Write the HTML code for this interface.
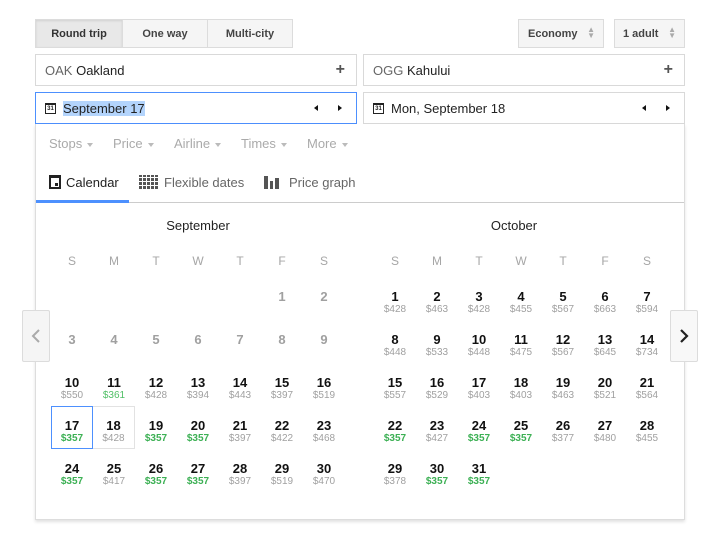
<!DOCTYPE html>
<html><head><meta charset="utf-8"><style>
*{box-sizing:border-box;margin:0;padding:0}
body{width:709px;height:542px;background:#fff;font-family:"Liberation Sans",Arial,sans-serif;position:relative;overflow:hidden;color:#222}
.a{position:absolute}
.btn{position:absolute;top:19px;height:29px;border:1px solid #dcdcdc;background:#f5f5f5;font-size:11px;font-weight:bold;color:#444;display:flex;align-items:center;justify-content:center}
.inp{position:absolute;height:32px;border:1px solid #d9d9d9;background:#fff;font-size:13px;display:flex;align-items:center;padding-left:9px}
.cal{display:inline-block;width:11px;height:11px;border:1px solid #222;font-size:6px;line-height:8px;text-align:center;margin-right:7px;font-weight:bold;border-top-width:2px}
.tri{position:absolute;top:12px;width:0;height:0;border-top:3.5px solid transparent;border-bottom:3.5px solid transparent}
.filt{position:absolute;top:136px;font-size:13px;color:#aaa}
.filt:after{content:"";display:inline-block;margin-left:5px;vertical-align:middle;border-left:3px solid transparent;border-right:3px solid transparent;border-top:4px solid #bbb}
.grid{position:absolute;top:277px;width:294px}
.c{position:absolute;width:42px;height:43px;text-align:center}
.c b{display:block;font-size:13px;line-height:14px;margin-top:13px;color:#111}
.c i{display:block;font-style:normal;font-size:10px;line-height:11px;color:#a0a0a0}
.c i.g{color:#3cb054;font-weight:bold}
.c.gr b{color:#a0a0a0}
.dh{position:absolute;top:254px;width:42px;text-align:center;font-size:12px;color:#a6a6a6}
.mt{position:absolute;top:218px;font-size:13px;color:#222;width:294px;text-align:center}
.ud{position:absolute;right:8px;top:7px;font-size:8px;line-height:6px;color:#aaa}
</style></head><body>
<div class="btn" style="left:35px;width:88px;background:#e8e8e8;box-shadow:inset 0 1px 2px rgba(0,0,0,.1);color:#333">Round trip</div>
<div class="btn" style="left:122px;width:86px">One way</div>
<div class="btn" style="left:207px;width:86px">Multi-city</div>
<div class="btn" style="left:518px;width:86px;justify-content:flex-start;padding-left:9px">Economy<span class="ud">▲<br>▼</span></div>
<div class="btn" style="left:614px;width:71px;justify-content:flex-start;padding-left:8px">1 adult<span class="ud">▲<br>▼</span></div>

<div class="inp" style="left:35px;top:54px;width:322px"><span style="color:#666">OAK&nbsp;</span>Oakland<span class="a" style="right:11px;top:6px;font-size:16px;color:#555;font-weight:bold">+</span></div>
<div class="inp" style="left:363px;top:54px;width:322px"><span style="color:#666">OGG&nbsp;</span>Kahului<span class="a" style="right:11px;top:6px;font-size:16px;color:#555;font-weight:bold">+</span></div>
<div class="inp" style="left:35px;top:92px;width:322px;border-color:#4d90fe"><span class="cal">31</span><span style="background:#b3d4fc;color:#222">September 17</span><span class="tri" style="right:38px;border-right:4px solid #111"></span><span class="tri" style="right:14px;border-left:4px solid #111"></span></div>
<div class="inp" style="left:363px;top:92px;width:322px"><span class="cal">31</span>Mon, September 18<span class="tri" style="right:38px;border-right:4px solid #111"></span><span class="tri" style="right:14px;border-left:4px solid #111"></span></div>

<div class="a" style="left:35px;top:124px;width:650px;height:396px;border:1px solid #ddd;border-top:none;box-shadow:0 2px 3px rgba(0,0,0,.12)"></div>
<div class="filt" style="left:49px">Stops</div>
<div class="filt" style="left:113px">Price</div>
<div class="filt" style="left:174px">Airline</div>
<div class="filt" style="left:241px">Times</div>
<div class="filt" style="left:307px">More</div>

<div class="a" style="left:49px;top:175px;width:12px;height:14px;border:2px solid #222;border-top-width:3px;background:#fff"><div class="a" style="left:4px;top:5px;width:3px;height:3px;background:#222"></div></div>
<div class="a" style="left:66px;top:175px;font-size:13px;color:#222">Calendar</div>
<div class="a" style="left:139px;top:175px;width:19px;height:14px;background:
repeating-linear-gradient(90deg,#555 0 3px,transparent 3px 4px),#fff;-webkit-mask:repeating-linear-gradient(0deg,#000 0 3px,transparent 3px 4px);"></div>
<div class="a" style="left:164px;top:175px;font-size:13px;color:#666">Flexible dates</div>
<div class="a" style="left:264px;top:176px;width:4px;height:13px;background:#555"></div>
<div class="a" style="left:270px;top:181px;width:3px;height:8px;background:#555"></div>
<div class="a" style="left:275px;top:178px;width:4px;height:11px;background:#555"></div>
<div class="a" style="left:289px;top:175px;font-size:13px;color:#666">Price graph</div>
<div class="a" style="left:36px;top:202px;width:648px;height:1px;background:#ccc"></div>
<div class="a" style="left:36px;top:200px;width:93px;height:3px;background:#4d90fe"></div>

<div class="mt" style="left:51px">September</div>
<div class="mt" style="left:367px">October</div>

<div class="dh" style="left:51px">S</div><div class="dh" style="left:93px">M</div><div class="dh" style="left:135px">T</div><div class="dh" style="left:177px">W</div><div class="dh" style="left:219px">T</div><div class="dh" style="left:261px">F</div><div class="dh" style="left:303px">S</div>
<div class="dh" style="left:374px">S</div><div class="dh" style="left:416px">M</div><div class="dh" style="left:458px">T</div><div class="dh" style="left:500px">W</div><div class="dh" style="left:542px">T</div><div class="dh" style="left:584px">F</div><div class="dh" style="left:626px">S</div>

<div class="grid" style="left:51px">
<div class="c gr" style="left:210px;top:0"><b>1</b></div>
<div class="c gr" style="left:252px;top:0"><b>2</b></div>
<div class="c gr" style="left:0;top:43px"><b>3</b></div>
<div class="c gr" style="left:42px;top:43px"><b>4</b></div>
<div class="c gr" style="left:84px;top:43px"><b>5</b></div>
<div class="c gr" style="left:126px;top:43px"><b>6</b></div>
<div class="c gr" style="left:168px;top:43px"><b>7</b></div>
<div class="c gr" style="left:210px;top:43px"><b>8</b></div>
<div class="c gr" style="left:252px;top:43px"><b>9</b></div>
<div class="c" style="left:0;top:86px"><b>10</b><i>$550</i></div>
<div class="c" style="left:42px;top:86px"><b>11</b><i style="color:#4fbf65">$361</i></div>
<div class="c" style="left:84px;top:86px"><b>12</b><i>$428</i></div>
<div class="c" style="left:126px;top:86px"><b>13</b><i>$394</i></div>
<div class="c" style="left:168px;top:86px"><b>14</b><i>$443</i></div>
<div class="c" style="left:210px;top:86px"><b>15</b><i>$397</i></div>
<div class="c" style="left:252px;top:86px"><b>16</b><i>$519</i></div>
<div class="c" style="left:0;top:129px;border:1px solid #4d90fe"><b style="margin-top:12px">17</b><i class="g">$357</i></div>
<div class="c" style="left:42px;top:129px;border:1px solid #e2e2e2;border-left:none"><b style="margin-top:12px">18</b><i>$428</i></div>
<div class="c" style="left:84px;top:129px"><b>19</b><i class="g">$357</i></div>
<div class="c" style="left:126px;top:129px"><b>20</b><i class="g">$357</i></div>
<div class="c" style="left:168px;top:129px"><b>21</b><i>$397</i></div>
<div class="c" style="left:210px;top:129px"><b>22</b><i>$422</i></div>
<div class="c" style="left:252px;top:129px"><b>23</b><i>$468</i></div>
<div class="c" style="left:0;top:172px"><b>24</b><i class="g">$357</i></div>
<div class="c" style="left:42px;top:172px"><b>25</b><i>$417</i></div>
<div class="c" style="left:84px;top:172px"><b>26</b><i class="g">$357</i></div>
<div class="c" style="left:126px;top:172px"><b>27</b><i class="g">$357</i></div>
<div class="c" style="left:168px;top:172px"><b>28</b><i>$397</i></div>
<div class="c" style="left:210px;top:172px"><b>29</b><i>$519</i></div>
<div class="c" style="left:252px;top:172px"><b>30</b><i>$470</i></div>
</div>

<div class="grid" style="left:374px">
<div class="c" style="left:0;top:0"><b>1</b><i>$428</i></div>
<div class="c" style="left:42px;top:0"><b>2</b><i>$463</i></div>
<div class="c" style="left:84px;top:0"><b>3</b><i>$428</i></div>
<div class="c" style="left:126px;top:0"><b>4</b><i>$455</i></div>
<div class="c" style="left:168px;top:0"><b>5</b><i>$567</i></div>
<div class="c" style="left:210px;top:0"><b>6</b><i>$663</i></div>
<div class="c" style="left:252px;top:0"><b>7</b><i>$594</i></div>
<div class="c" style="left:0;top:43px"><b>8</b><i>$448</i></div>
<div class="c" style="left:42px;top:43px"><b>9</b><i>$533</i></div>
<div class="c" style="left:84px;top:43px"><b>10</b><i>$448</i></div>
<div class="c" style="left:126px;top:43px"><b>11</b><i>$475</i></div>
<div class="c" style="left:168px;top:43px"><b>12</b><i>$567</i></div>
<div class="c" style="left:210px;top:43px"><b>13</b><i>$645</i></div>
<div class="c" style="left:252px;top:43px"><b>14</b><i>$734</i></div>
<div class="c" style="left:0;top:86px"><b>15</b><i>$557</i></div>
<div class="c" style="left:42px;top:86px"><b>16</b><i>$529</i></div>
<div class="c" style="left:84px;top:86px"><b>17</b><i>$403</i></div>
<div class="c" style="left:126px;top:86px"><b>18</b><i>$403</i></div>
<div class="c" style="left:168px;top:86px"><b>19</b><i>$463</i></div>
<div class="c" style="left:210px;top:86px"><b>20</b><i>$521</i></div>
<div class="c" style="left:252px;top:86px"><b>21</b><i>$564</i></div>
<div class="c" style="left:0;top:129px"><b>22</b><i class="g">$357</i></div>
<div class="c" style="left:42px;top:129px"><b>23</b><i>$427</i></div>
<div class="c" style="left:84px;top:129px"><b>24</b><i class="g">$357</i></div>
<div class="c" style="left:126px;top:129px"><b>25</b><i class="g">$357</i></div>
<div class="c" style="left:168px;top:129px"><b>26</b><i>$377</i></div>
<div class="c" style="left:210px;top:129px"><b>27</b><i>$480</i></div>
<div class="c" style="left:252px;top:129px"><b>28</b><i>$455</i></div>
<div class="c" style="left:0;top:172px"><b>29</b><i>$378</i></div>
<div class="c" style="left:42px;top:172px"><b>30</b><i class="g">$357</i></div>
<div class="c" style="left:84px;top:172px"><b>31</b><i class="g">$357</i></div>
</div>

<div class="a" style="left:22px;top:310px;width:28px;height:52px;border:1px solid #dcdcdc;border-radius:2px;background:#f5f5f5">
<svg width="26" height="50" class="a" style="left:0;top:0"><path d="M16 19 L10 25 L16 31" stroke="#aaa" stroke-width="2" fill="none"/></svg></div>
<div class="a" style="left:670px;top:310px;width:28px;height:52px;border:1px solid #dcdcdc;border-radius:2px;background:#f8f8f8">
<svg width="26" height="50" class="a" style="left:0;top:0"><path d="M10 19 L16 25 L10 31" stroke="#222" stroke-width="2.2" fill="none"/></svg></div>
</body></html>
